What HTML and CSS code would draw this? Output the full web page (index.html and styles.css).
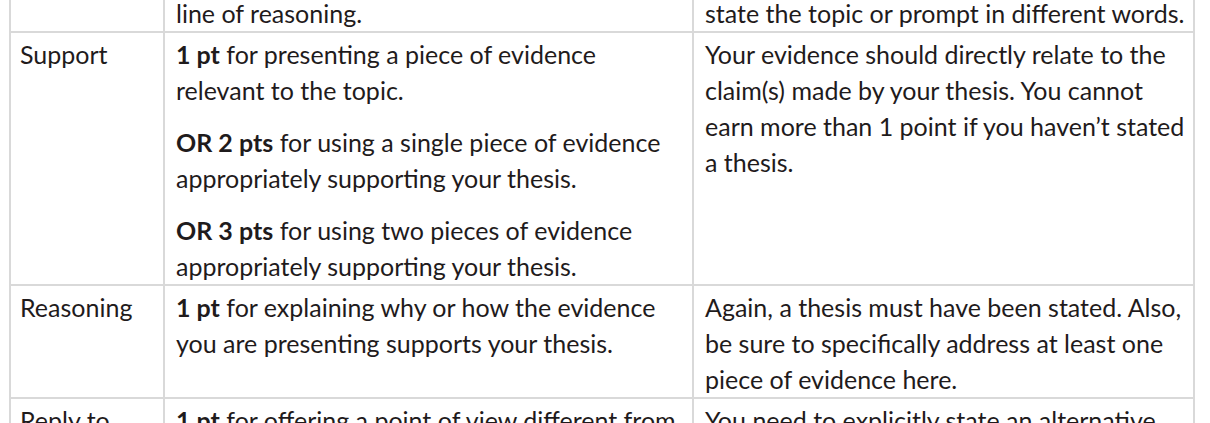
FILE: index.html
```html
<!DOCTYPE html>
<html lang="en">
<head>
<meta charset="utf-8">
<title>Rubric</title>
<link rel="stylesheet" href="styles.css">
</head>
<body>
<div class="sheet">
<table class="rubric">
  <colgroup>
    <col class="c1"><col class="c2"><col class="c3">
  </colgroup>
  <tbody>
    <tr class="cont">
      <td class="name"></td>
      <td class="desc"><p>line of reasoning.</p></td>
      <td class="note"><p>state the topic or prompt in different words.</p></td>
    </tr>
    <tr>
      <td class="name">Support</td>
      <td class="desc">
        <p><b>1 pt</b> for presenting a piece of evidence<br>relevant to the topic.</p>
        <p><b>OR 2 pts</b> for using a single piece of evidence<br>appropriately supporting your thesis.</p>
        <p><b>OR 3 pts</b> for using two pieces of evidence<br>appropriately supporting your thesis.</p>
      </td>
      <td class="note"><p>Your evidence should directly relate to the<br>claim(s) made by your thesis. You cannot<br>earn more than 1 point if you haven’t stated<br>a thesis.</p></td>
    </tr>
    <tr>
      <td class="name">Reasoning</td>
      <td class="desc"><p><b>1 pt</b> for explaining why or how the evidence<br>you are presenting supports your thesis.</p></td>
      <td class="note"><p>Again, a thesis must have been stated. Also,<br>be sure to specifically address at least one<br>piece of evidence here.</p></td>
    </tr>
    <tr>
      <td class="name">Reply to</td>
      <td class="desc"><p><b>1 pt</b> for offering a point of view different from</p></td>
      <td class="note"><p>You need to explicitly state an alternative</p></td>
    </tr>
  </tbody>
</table>
</div>
</body>
</html>
```

FILE: styles.css
```css
html, body {
  margin: 0;
  padding: 0;
  background: #ffffff;
  overflow: hidden;
  height: 423px;
}

.sheet {
  padding-left: 9px;
}

.rubric {
  margin-top: -5px;
  border-collapse: separate;
  border-spacing: 0;
  table-layout: fixed;
  width: 1186px;
  font-family: "Lato", "Open Sans", sans-serif;
  font-size: 25px;
  line-height: 36px;
  color: #1f1b1c;
}

.c1 { width: 156px; }
.c2 { width: 529px; }
.c3 { width: 501px; }

.rubric td {
  vertical-align: top;
  border-right: 2px solid #d9d9d9;
  border-bottom: 2px solid #d9d9d9;
  padding: 3px 8px 0 11px;
  white-space: nowrap;
  overflow: hidden;
}

.rubric td.name {
  border-left: 2px solid #d9d9d9;
  padding-left: 9px;
}

.rubric tr.cont td {
  padding-top: 0;
}

.rubric p {
  margin: 0 0 16px;
}

.rubric p:last-child {
  margin-bottom: 0;
}

.rubric b {
  font-weight: 700;
}
```
